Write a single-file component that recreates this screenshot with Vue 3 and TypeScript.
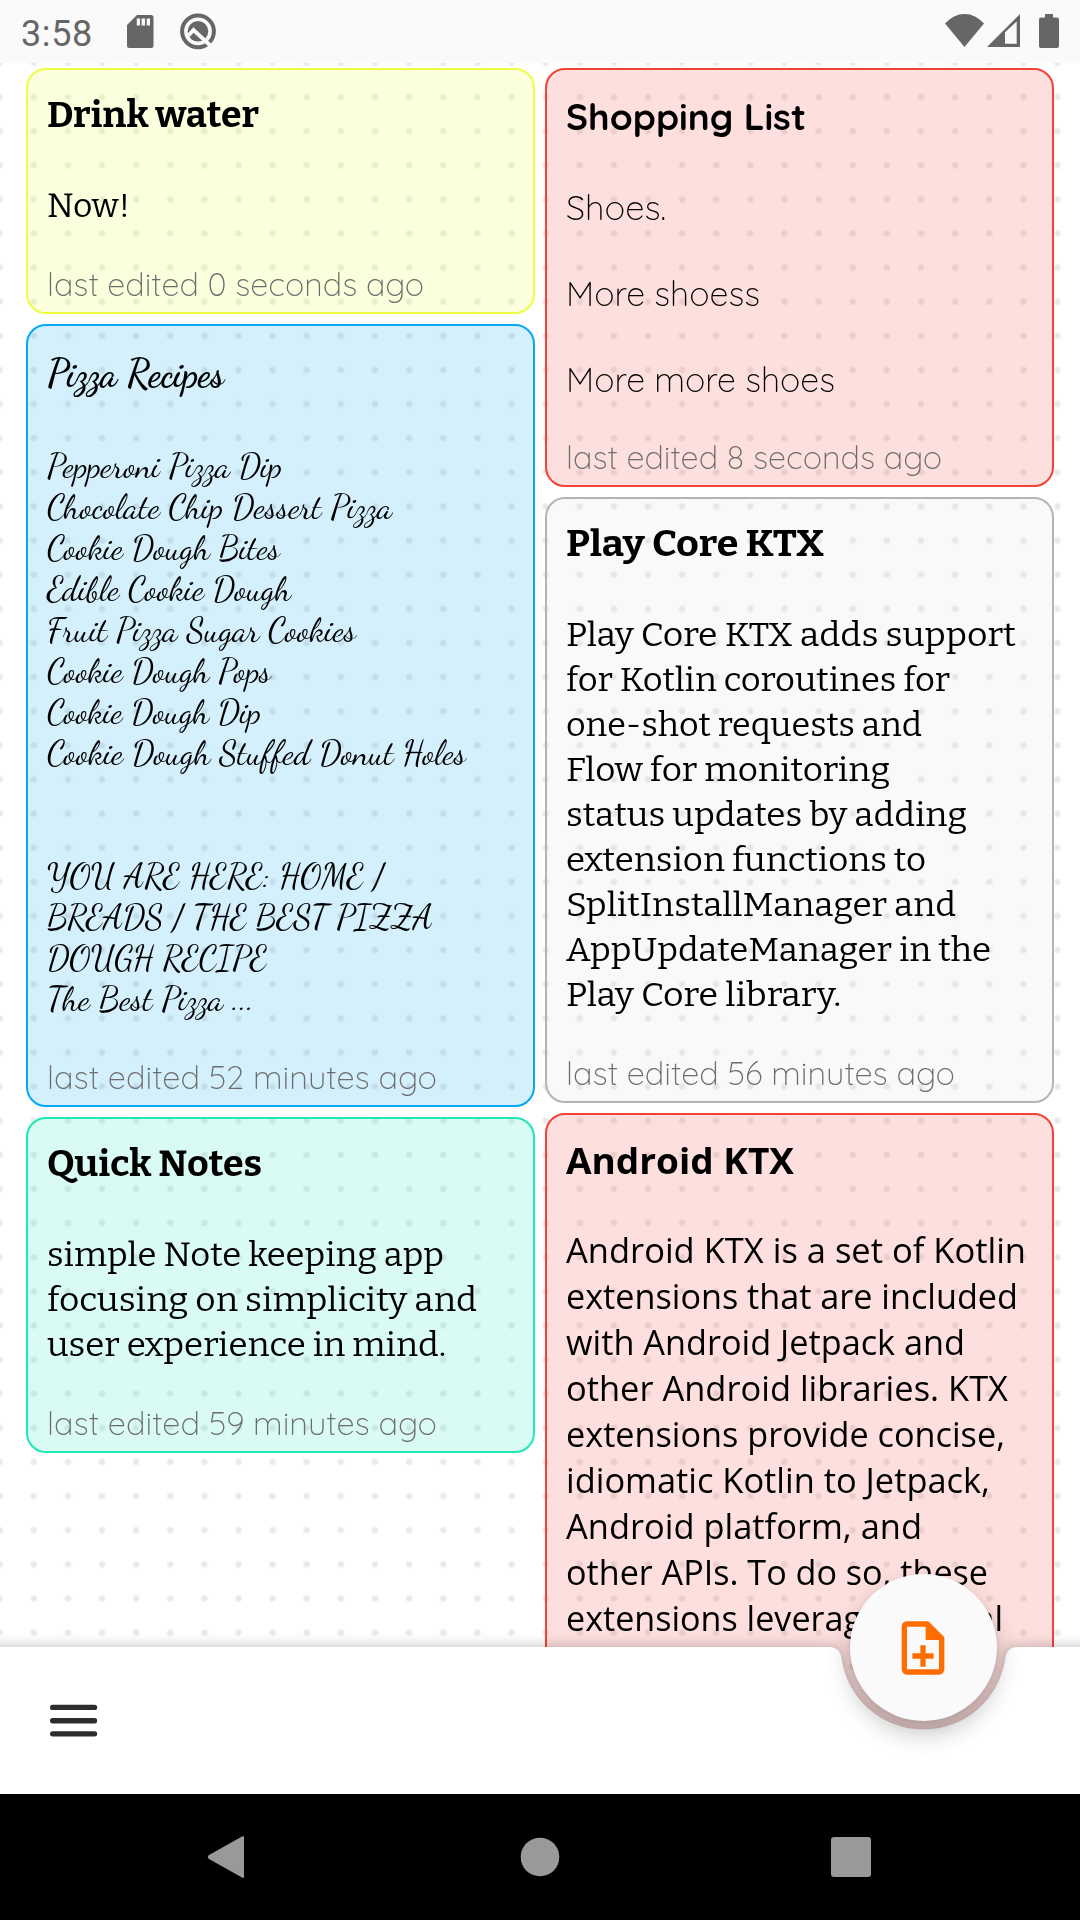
<script setup lang="ts">
import type { Directive } from 'vue'

interface Line {
  text: string
  width?: number
}

interface Note {
  title: Line
  lines: Line[]
  edited: Line
  color: string
  face: string
}

const left: Note[] = [
  {
    title: { text: 'Drink water', width: 212 },
    lines: [{ text: 'Now!', width: 83 }],
    edited: { text: 'last edited 0 seconds ago', width: 377 },
    color: 'yellow',
    face: 'slab',
  },
  {
    title: { text: 'Pizza Recipes', width: 177 },
    lines: [
      { text: 'Pepperoni Pizza Dip', width: 235 },
      { text: 'Chocolate Chip Dessert Pizza', width: 345 },
      { text: 'Cookie Dough Bites', width: 233 },
      { text: 'Edible Cookie Dough', width: 244 },
      { text: 'Fruit Pizza Sugar Cookies', width: 309 },
      { text: 'Cookie Dough Pops', width: 224 },
      { text: 'Cookie Dough Dip', width: 214 },
      { text: 'Cookie Dough Stuffed Donut Holes', width: 419 },
      { text: '' },
      { text: '' },
      { text: 'YOU ARE HERE: HOME /', width: 337 },
      { text: 'BREADS / THE BEST PIZZA', width: 386 },
      { text: 'DOUGH RECIPE', width: 220 },
      { text: 'The Best Pizza ...', width: 207 },
    ],
    edited: { text: 'last edited 52 minutes ago', width: 390 },
    color: 'blue',
    face: 'script',
  },
  {
    title: { text: 'Quick Notes', width: 215 },
    lines: [
      { text: 'simple Note keeping app', width: 397 },
      { text: 'focusing on simplicity and', width: 430 },
      { text: 'user experience in mind.', width: 399 },
    ],
    edited: { text: 'last edited 59 minutes ago', width: 390 },
    color: 'green',
    face: 'slab',
  },
]

const right: Note[] = [
  {
    title: { text: 'Shopping List', width: 240 },
    lines: [
      { text: 'Shoes.', width: 100 },
      { text: '' },
      { text: 'More shoess', width: 194 },
      { text: '' },
      { text: 'More more shoes', width: 269 },
    ],
    edited: { text: 'last edited 8 seconds ago', width: 376 },
    color: 'red',
    face: 'round',
  },
  {
    title: { text: 'Play Core KTX', width: 258 },
    lines: [
      { text: 'Play Core KTX adds support', width: 450 },
      { text: 'for Kotlin coroutines for', width: 384 },
      { text: 'one-shot requests and', width: 356 },
      { text: 'Flow for monitoring', width: 324 },
      { text: 'status updates by adding', width: 401 },
      { text: 'extension functions to', width: 360 },
      { text: 'SplitInstallManager and', width: 390 },
      { text: 'AppUpdateManager in the', width: 425 },
      { text: 'Play Core library.', width: 275 },
    ],
    edited: { text: 'last edited 56 minutes ago', width: 389 },
    color: 'grey',
    face: 'slab',
  },
  {
    title: { text: 'Android KTX', width: 228 },
    lines: [
      { text: 'Android KTX is a set of Kotlin', width: 460 },
      { text: 'extensions that are included', width: 452 },
      { text: 'with Android Jetpack and', width: 399 },
      { text: 'other Android libraries. KTX', width: 442 },
      { text: 'extensions provide concise,', width: 439 },
      { text: 'idiomatic Kotlin to Jetpack,', width: 424 },
      { text: 'Android platform, and', width: 356 },
      { text: 'other APIs. To do so, these', width: 422 },
      { text: 'extensions leverage several', width: 437 },
      { text: '' },
      { text: '' },
    ],
    edited: { text: '' },
    color: 'red',
    face: 'sans',
  },
]

const columns = [left, right]

// Stretches a line horizontally to its typeset width.
const vFit: Directive<HTMLElement, number | undefined> = {
  mounted(el, { value }) {
    if (value && el.offsetWidth) {
      el.style.transform = `scaleX(${value / el.getBoundingClientRect().width})`
    }
  },
}
</script>

<template>
  <div class="screen">
    <header class="status">
      <span class="time">3:58</span>
      <svg class="sd" width="27" height="33" viewBox="0 0 27 33">
        <path fill="#666" fill-rule="evenodd" d="M10 0H24Q26.500 0 26.500 2.500V30.500Q26.500 33 24 33H2.500Q0 33 0 30.500V10ZM9.800 3.500V10.500H13V3.500ZM14.600 3.500V10.500H18V3.500ZM19.700 3.500V10.500H23V3.500Z" />
      </svg>
      <svg class="q" width="36" height="37" viewBox="0 0 36 37">
        <circle cx="18" cy="18.300" r="15.900" fill="none" stroke="#666" stroke-width="4" />
        <circle cx="18" cy="18.300" r="10.300" fill="#666" />
        <path d="M8.500 22.500L13.500 17L32.500 34.500" fill="none" stroke="#fafafa" stroke-width="3.800" />
        <path d="M11 26L13.700 22.500L18.500 27.500Q14 28.500 11 26Z" fill="#666" />
      </svg>
      <span class="spacer"></span>
      <svg class="wifi" width="39" height="33" viewBox="0 0 39 33">
        <path fill="#666" d="M0 9.500Q8.500 0 19.500 0T39 9.500L19.500 33Z" />
      </svg>
      <svg class="signal" width="33" height="33" viewBox="0 0 33 33">
        <path fill="#666" fill-rule="evenodd" d="M0 33L33 0V33ZM18 18.300V29.800H29.700V7.600Z" />
      </svg>
      <svg class="battery" width="20" height="34" viewBox="0 0 20 34">
        <path fill="#666" d="M6 0H14V3.500H18Q20 3.500 20 5.500V32Q20 34 18 34H2Q0 34 0 32V5.500Q0 3.500 2 3.500H6Z" />
      </svg>
    </header>

    <main class="content">
      <div class="columns">
        <div v-for="(col, c) in columns" :key="c" class="column">
          <article v-for="note in col" :key="note.title.text" class="card" :class="[note.color, note.face]">
            <h2 class="title"><span v-fit="note.title.width" class="fit">{{ note.title.text }}</span></h2>
            <div class="body">
              <p v-for="(line, i) in note.lines" :key="i" class="line">
                <span v-fit="line.width" class="fit">{{ line.text }}</span>
              </p>
            </div>
            <p class="edited"><span v-fit="note.edited.width" class="fit">{{ note.edited.text }}</span></p>
          </article>
        </div>
      </div>

      <div class="bar">
        <svg class="bar-shape" width="1080" height="147" viewBox="0 0 1080 147">
          <path fill="#fff" d="M-30 0H829Q840 0 841.600 12A82.700 82.700 0 0 0 1005.200 12Q1006.500 0 1018 0H1110V180H-30Z" />
        </svg>
        <button class="menu" aria-label="Menu">
          <svg width="64" height="64" viewBox="0 0 24 24">
            <path d="M4 6.900H19.700M4 11.900H19.700M4 16.800H19.700" stroke="#2d2d2d" stroke-width="2" stroke-linecap="round" />
          </svg>
        </button>
        <button class="fab" aria-label="New note">
          <svg width="64" height="64" viewBox="0 0 24 24">
            <path fill="#ff6d00" fill-rule="evenodd" d="M14 2H6C4.890 2 4 2.890 4 4V20C4 21.110 4.890 22 6 22H18C19.110 22 20 21.110 20 20V8ZM18 20H6V4H13V9H18ZM11 11H13V14H16V16H13V19H11V16H8V14H11Z" />
          </svg>
        </button>
      </div>
    </main>

    <nav class="nav">
      <svg width="44" height="44" viewBox="0 0 44 44"><path fill="#999" d="M40 2.500V41.500Q40 44 38 42.500L5 24Q2.500 22 5 20L38 1.500Q40 0 40 2.500Z" /></svg>
      <svg class="home" width="44" height="44" viewBox="0 0 44 44"><circle cx="22" cy="22" r="19.300" fill="#999" /></svg>
      <svg class="recents" width="44" height="44" viewBox="0 0 44 44"><rect x="2" y="2" width="40" height="40" rx="3" fill="#999" /></svg>
    </nav>
  </div>
</template>

<style>
body {
  margin: 0;
}
</style>

<style scoped>
.screen {
  display: flex;
  flex-direction: column;
  width: 1080px;
  height: 1920px;
  overflow: hidden;
  background: #fff;
}

.status {
  flex: none;
  display: flex;
  align-items: flex-start;
  box-sizing: border-box;
  height: 63px;
  padding: 14px 21px 0;
  background: #fafafa;
}
.time {
  width: 106px;
  font: 400 36px/40px Roboto, sans-serif;
  letter-spacing: 0.6px;
  color: #666;
}
.sd {
  margin-top: 1px;
}
.q {
  margin: -1px 0 0 26px;
}
.spacer {
  flex: 1;
}
.signal {
  margin: 0 19px 0 3px;
}

.content {
  flex: 1;
  position: relative;
  min-height: 0;
  overflow: hidden;
  background-image: radial-gradient(circle at center, #e9e9e9 0, #e9e9e9 2.1px, transparent 4.2px);
  background-size: 34.135px 34.135px;
  background-position: 16.700px 16.900px;
}
.columns {
  display: flex;
  gap: 10px;
  padding: 5px 26px 0;
}
.column {
  flex: none;
  display: flex;
  flex-direction: column;
  gap: 10px;
  width: 509px;
}

.card {
  box-sizing: border-box;
  padding: 0 0 7px 19px;
  border: 2px solid;
  border-radius: 20px;
  color: #000;
}
.yellow {
  border-color: #eeff41;
  background: rgba(238, 255, 65, 0.18);
}
.red {
  border-color: #f44336;
  background: rgba(244, 67, 54, 0.17);
}
.blue {
  border-color: #03a9f4;
  background: rgba(3, 169, 244, 0.17);
}
.green {
  border-color: #1de9b6;
  background: rgba(29, 233, 182, 0.17);
}
.grey {
  border-color: #b4b4b4;
  background: rgba(220, 220, 220, 0.17);
}

.title,
.line,
.edited {
  margin: 0;
  white-space: nowrap;
}
.fit {
  display: inline-block;
  transform-origin: 0 50%;
}

.slab .title {
  margin: 21px 0 44px;
  font: 700 36px/49px 'Roboto Slab', 'Bitter', 'DejaVu Serif Condensed', 'DejaVu Serif', serif;
}
.slab .line {
  height: 45px;
  font: 420 33.500px/45px 'Roboto Slab', 'Bitter', 'DejaVu Serif Condensed', 'DejaVu Serif', serif;
}
.slab .edited {
  margin-top: 35px;
}

.round .title {
  margin: 23px 0 45px;
  font: 700 36px/48px Quicksand, Lato, sans-serif;
}
.round .line {
  height: 43px;
  font: 350 34px/43px Quicksand, Lato, sans-serif;
}
.round .edited {
  margin-top: 36px;
}

.script .title {
  margin: 24px 0 48px;
  font: 700 38px/48px 'Dancing Script', 'Liberation Serif', serif;
}
.script .line {
  height: 41px;
  font: 400 34px/41px 'Dancing Script', 'Liberation Serif', serif;
}
.script .edited {
  margin-top: 37px;
}

.sans .title {
  margin: 21px 0 42px;
  font: 700 36px/49px 'Open Sans', sans-serif;
}
.sans .line {
  height: 46px;
  font: 400 34px/46px 'Open Sans', sans-serif;
}

.card .edited {
  height: 41px;
  font: 350 32px/41px Quicksand, Lato, sans-serif;
  color: #6c6c6c;
}

.bar {
  position: absolute;
  inset: auto 0 0;
  display: flex;
  align-items: center;
  height: 147px;
}
.bar-shape {
  position: absolute;
  inset: 0;
  overflow: visible;
  filter: drop-shadow(0 0 7px rgba(0, 0, 0, 0.28));
}
button {
  display: flex;
  align-items: center;
  justify-content: center;
  padding: 0;
  border: 0;
  background: none;
}
.menu {
  position: relative;
  margin-left: 42px;
}
.fab {
  position: absolute;
  left: 850px;
  top: -73px;
  box-sizing: border-box;
  width: 147px;
  height: 147px;
  padding-right: 1px;
  border-radius: 50%;
  background: #fafafa;
  box-shadow: 0 12px 24px rgba(0, 0, 0, 0.24), 0 2px 5px rgba(0, 0, 0, 0.1);
}

.nav {
  flex: none;
  display: flex;
  align-items: center;
  box-sizing: border-box;
  height: 126px;
  padding-left: 204px;
  background: #000;
}
.home {
  margin-left: 270px;
}
.recents {
  margin-left: 267px;
}
</style>
